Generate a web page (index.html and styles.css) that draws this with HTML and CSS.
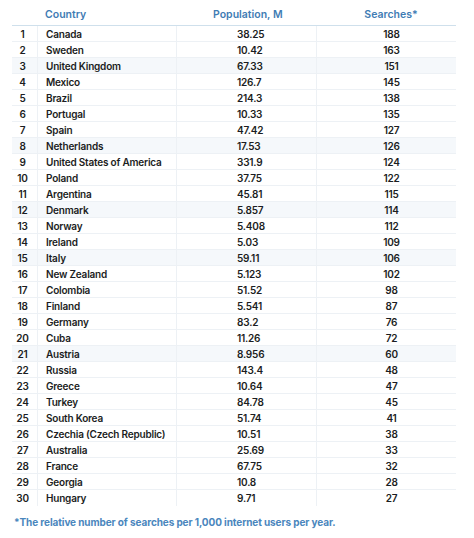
FILE: index.html
```html
<!DOCTYPE html>
<html>
<head>
<meta charset="utf-8">
<link rel="stylesheet" href="styles.css">
</head>
<body>
<div class="page">
  <div class="table">
    <div class="row head">
      <div class="c num"></div>
      <div class="c country">Country</div>
      <div class="c pop">Population, M</div>
      <div class="c srch">Searches*</div>
    </div>
    <div class="row"><div class="c num">1</div><div class="c country">Canada</div><div class="c pop">38.25</div><div class="c srch">188</div></div>
    <div class="row"><div class="c num">2</div><div class="c country">Sweden</div><div class="c pop">10.42</div><div class="c srch">163</div></div>
    <div class="row tint"><div class="c num">3</div><div class="c country">United Kingdom</div><div class="c pop">67.33</div><div class="c srch">151</div></div>
    <div class="row"><div class="c num">4</div><div class="c country">Mexico</div><div class="c pop">126.7</div><div class="c srch">145</div></div>
    <div class="row"><div class="c num">5</div><div class="c country">Brazil</div><div class="c pop">214.3</div><div class="c srch">138</div></div>
    <div class="row"><div class="c num">6</div><div class="c country">Portugal</div><div class="c pop">10.33</div><div class="c srch">135</div></div>
    <div class="row"><div class="c num">7</div><div class="c country">Spain</div><div class="c pop">47.42</div><div class="c srch">127</div></div>
    <div class="row tint"><div class="c num">8</div><div class="c country">Netherlands</div><div class="c pop">17.53</div><div class="c srch">126</div></div>
    <div class="row"><div class="c num">9</div><div class="c country">United States of America</div><div class="c pop">331.9</div><div class="c srch">124</div></div>
    <div class="row"><div class="c num">10</div><div class="c country">Poland</div><div class="c pop">37.75</div><div class="c srch">122</div></div>
    <div class="row"><div class="c num">11</div><div class="c country">Argentina</div><div class="c pop">45.81</div><div class="c srch">115</div></div>
    <div class="row tint"><div class="c num">12</div><div class="c country">Denmark</div><div class="c pop">5.857</div><div class="c srch">114</div></div>
    <div class="row"><div class="c num">13</div><div class="c country">Norway</div><div class="c pop">5.408</div><div class="c srch">112</div></div>
    <div class="row"><div class="c num">14</div><div class="c country">Ireland</div><div class="c pop">5.03</div><div class="c srch">109</div></div>
    <div class="row tint"><div class="c num">15</div><div class="c country">Italy</div><div class="c pop">59.11</div><div class="c srch">106</div></div>
    <div class="row"><div class="c num">16</div><div class="c country">New Zealand</div><div class="c pop">5.123</div><div class="c srch">102</div></div>
    <div class="row"><div class="c num">17</div><div class="c country">Colombia</div><div class="c pop">51.52</div><div class="c srch">98</div></div>
    <div class="row"><div class="c num">18</div><div class="c country">Finland</div><div class="c pop">5.541</div><div class="c srch">87</div></div>
    <div class="row"><div class="c num">19</div><div class="c country">Germany</div><div class="c pop">83.2</div><div class="c srch">76</div></div>
    <div class="row"><div class="c num">20</div><div class="c country">Cuba</div><div class="c pop">11.26</div><div class="c srch">72</div></div>
    <div class="row tint"><div class="c num">21</div><div class="c country">Austria</div><div class="c pop">8.956</div><div class="c srch">60</div></div>
    <div class="row"><div class="c num">22</div><div class="c country">Russia</div><div class="c pop">143.4</div><div class="c srch">48</div></div>
    <div class="row"><div class="c num">23</div><div class="c country">Greece</div><div class="c pop">10.64</div><div class="c srch">47</div></div>
    <div class="row"><div class="c num">24</div><div class="c country">Turkey</div><div class="c pop">84.78</div><div class="c srch">45</div></div>
    <div class="row"><div class="c num">25</div><div class="c country">South Korea</div><div class="c pop">51.74</div><div class="c srch">41</div></div>
    <div class="row"><div class="c num">26</div><div class="c country">Czechia (Czech Republic)</div><div class="c pop">10.51</div><div class="c srch">38</div></div>
    <div class="row"><div class="c num">27</div><div class="c country">Australia</div><div class="c pop">25.69</div><div class="c srch">33</div></div>
    <div class="row"><div class="c num">28</div><div class="c country">France</div><div class="c pop">67.75</div><div class="c srch">32</div></div>
    <div class="row"><div class="c num">29</div><div class="c country">Georgia</div><div class="c pop">10.8</div><div class="c srch">28</div></div>
    <div class="row last"><div class="c num">30</div><div class="c country">Hungary</div><div class="c pop">9.71</div><div class="c srch">27</div></div>
  </div>
  <p class="note">*The relative number of searches per 1,000 internet users per year.</p>
</div>
</body>
</html>
```

FILE: styles.css
```css
html, body {
  margin: 0;
  padding: 0;
  background: #ffffff;
}
body {
  font-family: Inter, "Noto Sans", sans-serif;
  color: #1b1d22;
  width: 474px;
  height: 538px;
  overflow: hidden;
}
.page {
  padding: 0 0 0 12px;
}
.table {
  width: 444px;
  display: flex;
  flex-direction: column;
}
.row {
  display: grid;
  grid-template-columns: 25px 139px 140px 140px;
  height: 16px;
  border-bottom: 1px solid #edf1f5;
  box-sizing: border-box;
  font-size: 10px;
  letter-spacing: -0.2px;
  font-weight: 600;
  align-items: center;
}
.row.tint {
  background: #f5f8fb;
}
.row.last {
  border-bottom: none;
}
.row.head {
  height: 26px;
  border-bottom: 1.5px solid #cfe0ec;
  color: #3f7cb4;
  font-size: 10.5px;
  letter-spacing: 0;
  align-items: start;
  padding-top: 8px;
}
.c {
  height: 100%;
  display: flex;
  align-items: center;
  white-space: nowrap;
  box-sizing: border-box;
}
.row:not(.head) .c + .c {
  border-left: 1px solid #edf1f5;
}
.head .c {
  align-items: flex-start;
}
.num {
  justify-content: center;
  padding-right: 4px;
}
.country {
  padding-left: 8px;
}
.pop {
  padding-left: 60px;
}
.head .pop {
  padding-left: 37px;
}
.srch {
  justify-content: center;
  padding-left: 10px;
}
.note {
  margin: 10px 0 0 2px;
  font-size: 10px;
  letter-spacing: -0.1px;
  font-weight: 700;
  color: #4a86bd;
}
```
